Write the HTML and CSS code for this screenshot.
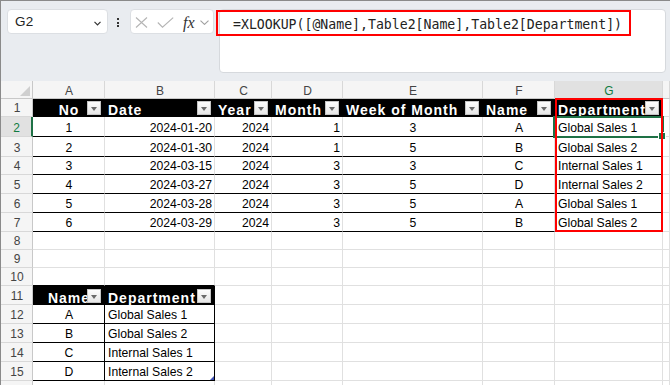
FILE: index.html
```html
<!DOCTYPE html>
<html>
<head>
    <title>XLOOKUP Sheet</title>
    <link rel="stylesheet" href="styles.css">
</head>
<body>
    <div class="app">
        <div class="topbar">
            <div class="namebox">
                <span>G2</span>
                <svg width="7" height="5" viewBox="0 0 7 5"><path d="M0.5 0.8 L3.5 3.8 L6.5 0.8" fill="none" stroke="#333" stroke-width="1.2"/></svg>
            </div>
            <div class="dots"><i></i><i></i><i></i></div>
            <div class="fxbox">
                <svg width="13" height="11" viewBox="0 0 13 11"><path d="M1 0.5 L12 10.5 M12 0.5 L1 10.5" stroke="#b4b4b4" stroke-width="1.1" fill="none"/></svg>
                <svg class="check" width="17" height="11" viewBox="0 0 17 11"><path d="M0.8 5.5 L5.5 10.2 L16.2 0.6" stroke="#b4b4b4" stroke-width="1.1" fill="none"/></svg>
                <span class="fx">fx</span>
                <svg class="fxdrop" width="9" height="5" viewBox="0 0 9 5"><path d="M0.5 0.6 L4.5 4.4 L8.5 0.6" fill="none" stroke="#a0a0a0" stroke-width="1.1"/></svg>
            </div>
            <div class="formula">
                <span class="formula-text">=XLOOKUP([@Name],Table2[Name],Table2[Department])</span>
                <div class="callout"></div>
            </div>
        </div>

        <div class="sheet" id="sheet">
            <div class="mark-sel"></div>
            <div class="mark-red"></div>
        </div>
    </div>

    <script>
        // build the worksheet grid from the two tables
        const sheet = document.getElementById('sheet');
        const letters = ['A', 'B', 'C', 'D', 'E', 'F', 'G', ''];
        const align = ['c', 'r', 'r', 'r', 'c', 'c', 'l', 'l'];

        const table1 = {
            head: ['No', 'Date', 'Year', 'Month', 'Week of Month', 'Name', 'Department'],
            rows: [
                [1, '2024-01-20', 2024, 1, 3, 'A', 'Global Sales 1'],
                [2, '2024-01-30', 2024, 1, 5, 'B', 'Global Sales 2'],
                [3, '2024-03-15', 2024, 3, 3, 'C', 'Internal Sales 1'],
                [4, '2024-03-27', 2024, 3, 5, 'D', 'Internal Sales 2'],
                [5, '2024-03-28', 2024, 3, 5, 'A', 'Global Sales 1'],
                [6, '2024-03-29', 2024, 3, 5, 'B', 'Global Sales 2']
            ]
        };

        const table2 = {
            head: ['Name', 'Department'],
            rows: [
                ['A', 'Global Sales 1'],
                ['B', 'Global Sales 2'],
                ['C', 'Internal Sales 1'],
                ['D', 'Internal Sales 2']
            ]
        };

        function cell(cls, text) {
            const d = document.createElement('div');
            d.className = 'cell ' + cls;
            if (text !== undefined) d.textContent = text;
            sheet.appendChild(d);
            return d;
        }

        function addFilter(d) {
            const b = document.createElement('span');
            b.className = 'filter';
            d.appendChild(b);
        }

        cell('corner');
        letters.forEach(function (l, i) {
            cell('colhdr' + (i === 6 ? ' hsel' : ''), l);
        });

        // rows 1-15 are numbered, row 16 only peeks in at the bottom edge
        for (let r = 1; r <= 16; r++) {
            cell('rowhdr' + (r === 2 ? ' hsel' : ''), r < 16 ? r : '');
            for (let c = 0; c < 8; c++) {
                let cls = align[c];
                let text = '';
                let filter = false;

                if (r === 1 && c < 7) {
                    cls = 'th ' + (c === 0 ? 'c' : 'l');
                    text = table1.head[c];
                    filter = true;
                } else if (r >= 2 && r <= 7 && c < 7) {
                    cls += ' tb';
                    text = table1.rows[r - 2][c];
                } else if (r === 10 && c < 2) {
                    cls += ' tb';
                } else if (r === 11 && c < 2) {
                    cls = 'th ' + (c === 0 ? 'c' : 'l');
                    text = table2.head[c];
                    filter = true;
                } else if (r >= 12 && r <= 15 && c < 2) {
                    cls = (c === 0 ? 'c' : 'l') + ' tb tr';
                    text = table2.rows[r - 12][c];
                    if (r === 15 && c === 1) cls += ' rz';
                }

                const d = cell(cls, text);
                if (filter) addFilter(d);
            }
        }
    </script>
</body>
</html>
```

FILE: styles.css
```css
* {
    box-sizing: border-box;
}

body {
    margin: 0;
    font-family: "Liberation Sans", Arial, sans-serif;
    background-color: #fff;
}

.app {
    width: 670px;
    height: 385px;
    overflow: hidden;
    border-top: 1px solid #8a8a8a;
    border-left: 1px solid #8a8a8a;
}

/* formula bar area */
.topbar {
    height: 80px;
    background-color: #e9ecf0;
    display: flex;
    align-items: flex-start;
    padding: 8px 0 0 6px;
}

.namebox {
    width: 101px;
    height: 25px;
    background-color: #fff;
    border: 1px solid #dcdfe3;
    border-radius: 4px;
    display: flex;
    align-items: center;
    justify-content: space-between;
    padding: 0 6px 0 7px;
    font-size: 13.5px;
    letter-spacing: 0.3px;
    color: #222;
}

.namebox svg {
    margin-top: 3px;
}

.dots {
    width: 2px;
    margin-left: 9px;
    padding-top: 9px;
    display: flex;
    flex-direction: column;
    gap: 1.5px;
}

.dots i {
    display: block;
    width: 2px;
    height: 2px;
    background-color: #333;
}

.fxbox {
    width: 84px;
    height: 25px;
    margin-left: 11px;
    background-color: #fff;
    border: 1px solid #dcdfe3;
    border-radius: 4px;
    display: flex;
    align-items: center;
    padding: 2px 0 0 4px;
}

.fxbox .check {
    margin-left: 9px;
}

.fx {
    margin-left: 9px;
    font-family: "Liberation Serif", "Times New Roman", serif;
    font-style: italic;
    font-size: 16px;
    color: #333;
    line-height: 16px;
}

.fxdrop {
    margin-left: 5px;
    margin-top: -1px;
}

.formula {
    position: relative;
    width: 447px;
    height: 64px;
    margin-left: 5px;
    background-color: #fff;
    border: 1px solid #d6d9dd;
    border-radius: 4px;
    padding: 5px 0 0 13px;
}

.formula-text {
    font-family: "DejaVu Sans Mono", monospace;
    font-size: 13.2px;
    line-height: 16px;
    color: #222;
    white-space: nowrap;
}

.callout {
    position: absolute;
    left: -4px;
    top: 0;
    width: 415px;
    height: 26px;
    border: 2px solid #f00;
}

/* worksheet */
.sheet {
    position: relative;
    display: grid;
    grid-template-columns: 32px 72px 110px 57px 71px 140px 72px 108px 1fr;
    grid-template-rows: 18px 18px 20px 20px 18px 19px 19px 19px 18px 18px 18px 19px 19px 19px 19px 19px 19px;
}

.cell {
    position: relative;
    display: flex;
    align-items: flex-end;
    padding: 0 2px 1px 3px;
    border-right: 1px solid #e0e0e0;
    border-bottom: 1px solid #e0e0e0;
    font-size: 12.2px;
    line-height: 13px;
    white-space: nowrap;
    color: #000;
}

.c { justify-content: center; }
.r { justify-content: flex-end; }
.l { justify-content: flex-start; }

.corner {
    background-color: #f5f5f5;
    border-right-color: #c8c8c8;
    border-bottom-color: #c8c8c8;
}

.corner::after {
    content: "";
    position: absolute;
    right: 2px;
    bottom: 2px;
    border-left: 10px solid transparent;
    border-bottom: 10px solid #cfcfcf;
}

.colhdr {
    justify-content: center;
    padding-bottom: 0;
    background-color: #f5f5f5;
    color: #444;
    font-size: 12px;
    border-right-color: #d8d8d8;
    border-bottom-color: #c8c8c8;
}

.rowhdr {
    justify-content: center;
    background-color: #f5f5f5;
    color: #444;
    font-size: 12px;
    border-right-color: #c8c8c8;
    border-bottom-color: #d8d8d8;
}

.hsel {
    background-color: #e1e1e1;
    color: #107c41;
}

.rowhdr.hsel {
    border-right: 2px solid #1e7145;
}

.th {
    background-color: #000;
    color: #fff;
    font-weight: bold;
    font-size: 14px;
    line-height: 11px;
    letter-spacing: 1px;
    padding-bottom: 0;
    border-right-color: #000;
    border-bottom-color: #000;
}

.filter {
    position: absolute;
    right: 3px;
    bottom: 1px;
    width: 14px;
    height: 14px;
    border: 1px solid #c4c4c4;
    background: linear-gradient(#fdfdfd, #e6e6e6);
}

.filter::after {
    content: "";
    position: absolute;
    left: 3px;
    top: 5px;
    border-left: 3.5px solid transparent;
    border-right: 3.5px solid transparent;
    border-top: 4px solid #6a6a6a;
}

.tb {
    border-bottom-color: #000;
}

.tr {
    border-right-color: #000;
}

.rz::after {
    content: "";
    position: absolute;
    right: 0;
    bottom: 0;
    border-left: 4px solid transparent;
    border-bottom: 4px solid #3f51b5;
}

/* selection and annotation overlays */
.mark-sel {
    position: absolute;
    left: 552px;
    top: 35px;
    width: 111px;
    height: 22px;
    border: 2px solid #1e7145;
    z-index: 1;
}

.mark-sel::after {
    content: "";
    position: absolute;
    right: -4px;
    bottom: -4px;
    width: 6px;
    height: 6px;
    background-color: #1e7145;
    border: 1px solid #fff;
}

.mark-red {
    position: absolute;
    left: 554px;
    top: 17px;
    width: 108px;
    height: 134px;
    border: 2px solid #f00;
    z-index: 2;
}
```
